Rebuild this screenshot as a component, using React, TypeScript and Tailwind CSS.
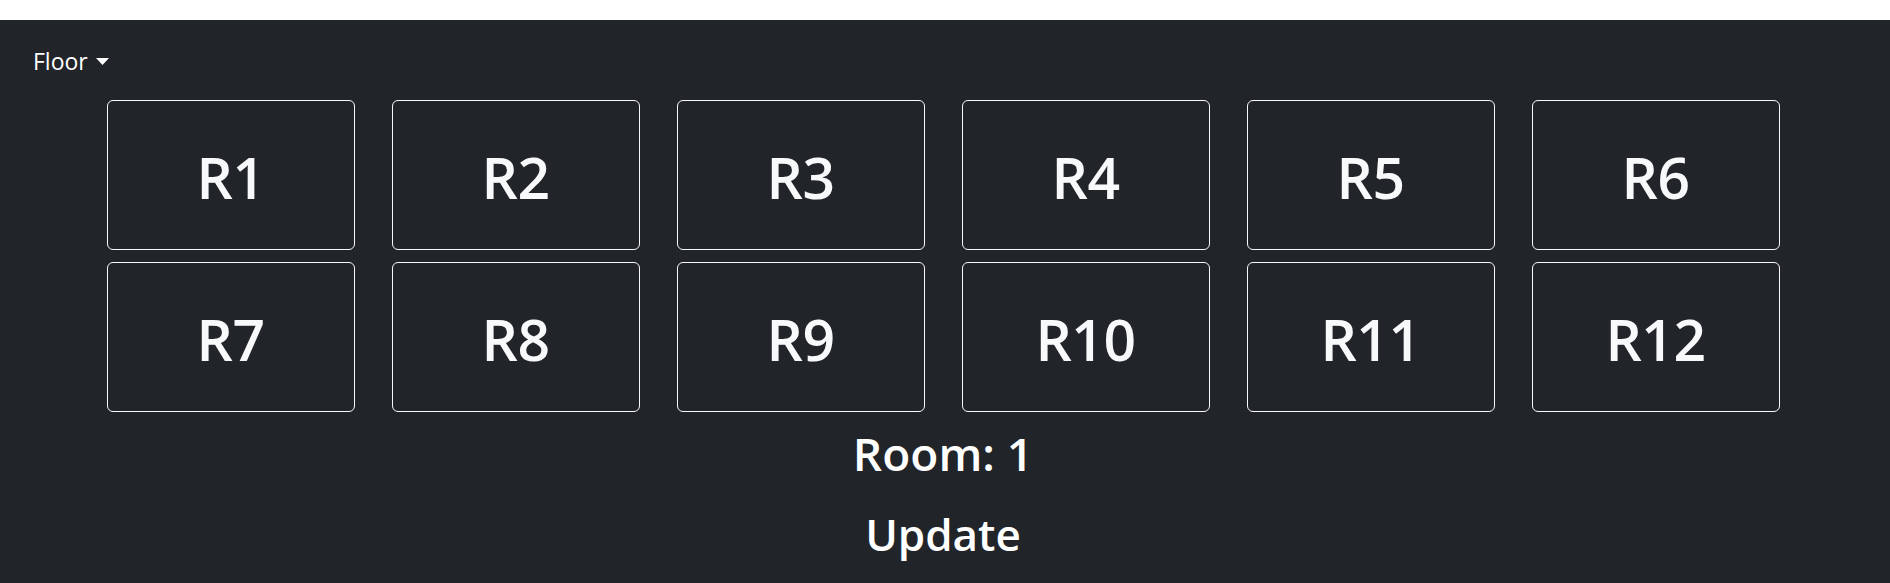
import React from "react";

const rooms = ["R1","R2","R3","R4","R5","R6","R7","R8","R9","R10","R11","R12"];

export default function App() {
  return (
    <div className="w-[1890px] h-[583px] overflow-hidden" style={{ fontFamily: '"Open Sans", "Noto Sans", sans-serif' }}>
      <div className="h-[20px] bg-white" />
      <div className="bg-[#212529] h-[563px] text-white">
        <div className="pl-[33px] pt-[26px] h-[80px]">
          <button className="flex items-center gap-[8px] text-[23px] leading-[30px] text-white">
            <span>Floor</span>
            <svg width="13" height="7" viewBox="0 0 13 7"><path d="M0 0 L13 0 L6.5 7 Z" fill="white" /></svg>
          </button>
        </div>
        <div className="flex justify-center pr-[4px]">
          <div className="grid grid-cols-[repeat(6,248px)] gap-x-[37px] gap-y-[12px]">
            {rooms.map((r) => (
              <div key={r} className="h-[150px] border border-[#f8f9fa] rounded-[6px] flex items-center justify-center">
                <span className="text-[57px] font-semibold text-[#f8f9fa] leading-none tracking-[-0.5px] mt-[4px]">{r}</span>
              </div>
            ))}
          </div>
        </div>
        <div className="flex flex-col items-center pr-[4px]">
          <div className="text-[46px] leading-[56px] mt-[13px] font-semibold">Room: 1</div>
          <div className="text-[44px] leading-[56px] mt-[25px] font-semibold">Update</div>
        </div>
      </div>
    </div>
  );
}
